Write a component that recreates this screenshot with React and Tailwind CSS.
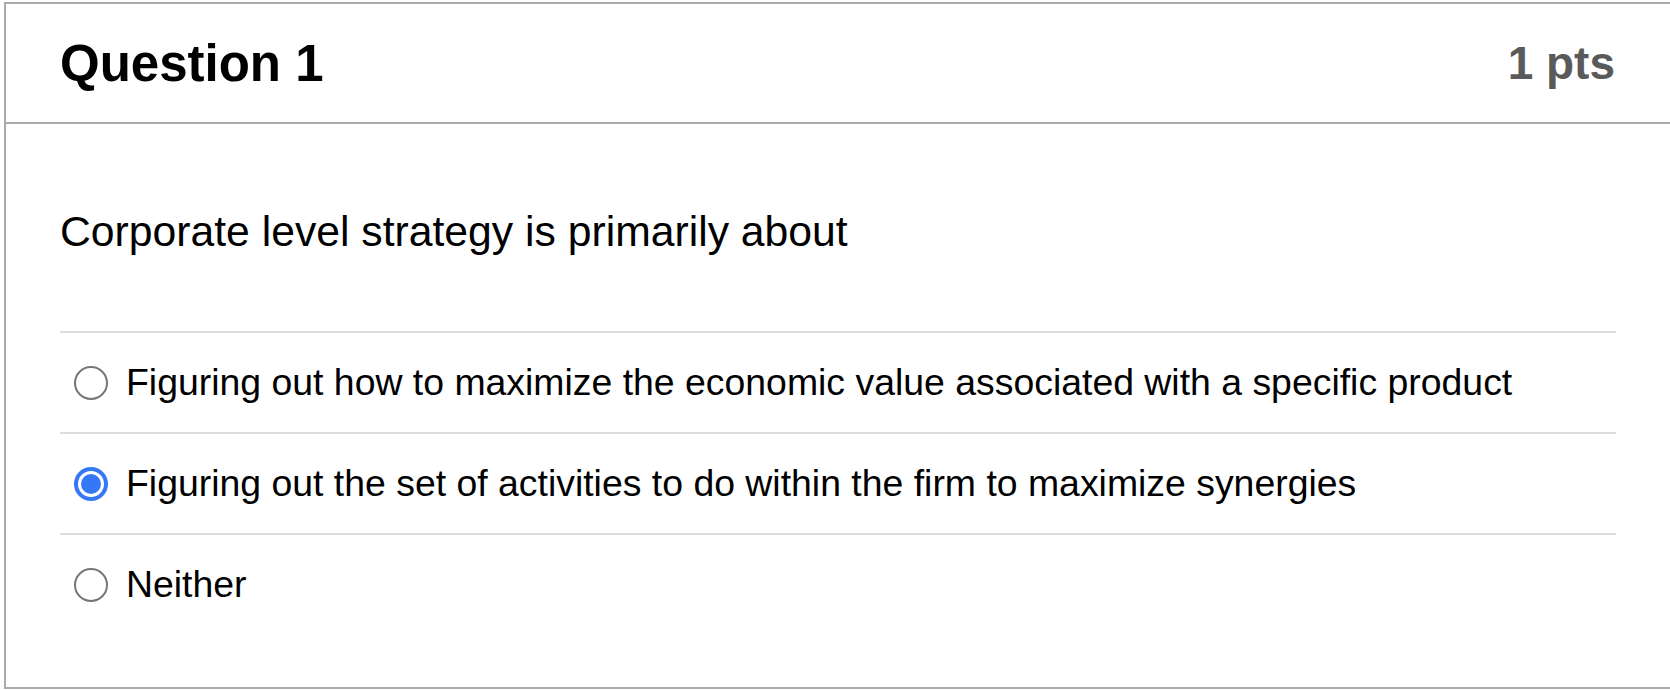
import React from 'react';

const options = [
  { text: 'Figuring out how to maximize the economic value associated with a specific product', checked: false },
  { text: 'Figuring out the set of activities to do within the firm to maximize synergies', checked: true },
  { text: 'Neither', checked: false },
];

const Radio = ({ checked }) => {
  if (checked) {
    return (
      <div className="w-[34px] h-[34px] shrink-0 rounded-full border-[4px] border-[#3478f6] flex items-center justify-center">
        <div className="w-[20px] h-[20px] rounded-full bg-[#3478f6]" />
      </div>
    );
  }
  return <div className="w-[34px] h-[34px] shrink-0 rounded-full border-2 border-[#767676] bg-white" />;
};

const App = () => {
  return (
    <div className="w-[1670px] h-[690px] bg-white pt-[2px] pl-[4px] font-['Liberation_Sans',Arial,sans-serif] text-black">
      <div className="h-[687px] border-2 border-r-0 border-[#aaaaaa] flex flex-col">
        <div className="h-[120px] shrink-0 border-b-2 border-[#aaaaaa] flex items-center justify-between pl-[54px] pr-[55px]">
          <h2 className="text-[51px] font-bold leading-none">Question 1</h2>
          <span className="text-[46px] font-bold leading-none text-[#5a5a5a]">1 pts</span>
        </div>

        <div className="px-[54px]">
          <p className="text-[42.7px] leading-[49px] pt-[83px] pb-[75px]">
            Corporate level strategy is primarily about
          </p>
          {options.map((opt) => (
            <div
              key={opt.text}
              className="h-[101px] border-t-2 border-[#dddddd] flex items-center pl-[14px]"
            >
              <Radio checked={opt.checked} />
              <span className="ml-[18px] text-[37.4px] leading-none">{opt.text}</span>
            </div>
          ))}
        </div>
      </div>
    </div>
  );
};

export default App;
